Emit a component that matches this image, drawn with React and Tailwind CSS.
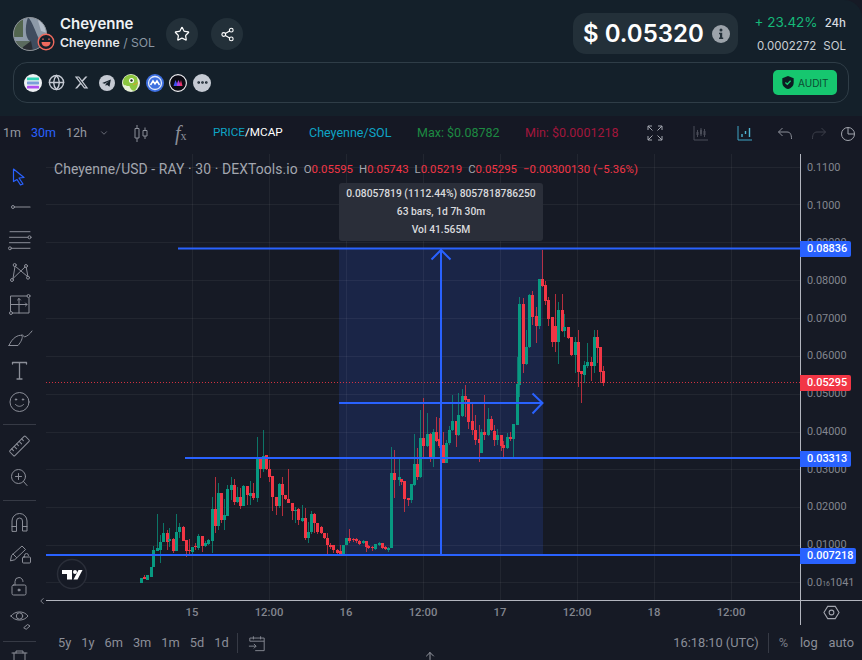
import { Star, Share2, Globe, ChevronDown, ArrowUp, ChevronLeft, MoreHorizontal } from 'lucide-react';

const G = 'g';
const R = 'r';

// x, body top, body bottom, high, low, colour (page pixels)
const CANDLES = [
  [141, 578, 583, 578, 583, G], [144, 577, 579, 575, 579, R], [147, 575, 580, 575, 580, G], [151, 567, 577, 567, 577, G],
  [153, 550, 567, 546, 567, G], [157, 548, 551, 514, 551, G], [160, 542, 550, 535, 563, G], [163, 533, 542, 523, 542, G],
  [167, 533, 542, 530, 550, R], [169, 539, 541, 528, 547, G], [173, 539, 551, 538, 553, R], [176, 532, 551, 514, 551, G],
  [179, 527, 532, 523, 538, G], [183, 527, 541, 526, 541, R], [186, 540, 551, 540, 557, R], [189, 550, 551, 539, 555, R],
  [192, 547, 552, 547, 555, G], [195, 546, 547, 543, 550, R], [198, 536, 548, 534, 550, G], [202, 536, 546, 536, 552, R],
  [205, 543, 546, 541, 547, G], [208, 540, 544, 539, 545, G], [212, 509, 541, 497, 553, G], [215, 509, 526, 477, 533, R],
  [218, 493, 526, 483, 530, G], [221, 493, 520, 493, 523, R], [224, 515, 520, 499, 530, G], [227, 489, 516, 485, 516, G],
  [231, 485, 490, 477, 500, G], [234, 485, 502, 479, 505, R], [237, 497, 502, 487, 503, G], [240, 497, 506, 488, 509, R],
  [243, 486, 506, 485, 506, G], [247, 486, 495, 486, 505, R], [250, 493, 496, 481, 505, G], [253, 493, 498, 483, 500, R],
  [257, 458, 498, 437, 502, G], [260, 458, 469, 458, 478, R], [263, 456, 469, 430, 472, G], [266, 455, 469, 455, 470, R],
  [269, 469, 477, 460, 482, R], [272, 476, 497, 476, 511, R], [276, 497, 506, 497, 515, R], [279, 484, 506, 483, 508, G],
  [282, 484, 495, 477, 516, R], [285, 495, 499, 495, 500, R], [288, 499, 503, 469, 503, R], [292, 503, 511, 503, 520, R],
  [295, 510, 511, 507, 523, G], [298, 509, 520, 508, 525, R], [302, 518, 521, 505, 522, G], [305, 518, 538, 508, 540, R],
  [308, 532, 538, 522, 543, G], [311, 514, 532, 511, 534, G], [314, 514, 523, 513, 533, R], [317, 523, 532, 523, 534, R],
  [321, 527, 533, 526, 534, R], [324, 533, 538, 533, 539, R], [327, 538, 545, 533, 555, R], [330, 545, 547, 543, 549, R],
  [333, 545, 550, 545, 553, R], [337, 550, 553, 549, 555, R], [340, 551, 554, 545, 555, R], [343, 545, 554, 545, 555, G],
  [346, 538, 545, 538, 545, G], [349, 538, 541, 529, 543, R], [353, 539, 540, 538, 542, R], [356, 539, 541, 538, 543, R],
  [359, 541, 544, 540, 545, R], [363, 541, 543, 540, 544, G], [366, 541, 547, 541, 552, R], [368, 546, 548, 545, 549, R],
  [372, 547, 548, 546, 551, R], [375, 544, 549, 544, 550, G], [379, 543, 545, 542, 546, G], [382, 543, 548, 543, 549, R],
  [385, 547, 549, 546, 550, R], [388, 548, 550, 547, 552, G], [391, 473, 548, 447, 548, G], [394, 473, 480, 450, 498, R],
  [399, 477, 480, 458, 486, G], [401, 479, 482, 479, 485, R], [404, 481, 499, 481, 512, R], [408, 498, 500, 498, 506, R],
  [411, 484, 500, 484, 503, G], [414, 464, 485, 434, 486, G], [417, 464, 477, 448, 480, R], [420, 438, 477, 410, 478, G],
  [423, 438, 446, 398, 457, R], [427, 434, 446, 413, 447, G], [430, 434, 459, 433, 462, R], [433, 432, 459, 429, 467, G],
  [436, 432, 441, 417, 442, R], [439, 439, 446, 418, 448, R], [443, 445, 463, 432, 463, R], [446, 443, 463, 440, 463, G],
  [449, 430, 443, 426, 445, G], [452, 421, 430, 395, 431, G], [456, 421, 435, 421, 447, R], [458, 415, 435, 393, 436, G],
  [462, 396, 416, 389, 417, G], [465, 396, 400, 385, 417, R], [468, 399, 422, 399, 429, R], [472, 421, 430, 404, 435, R],
  [475, 430, 440, 415, 445, R], [479, 439, 443, 425, 462, R], [481, 432, 453, 429, 453, G], [484, 432, 435, 395, 440, R],
  [488, 419, 435, 408, 436, G], [491, 419, 430, 416, 431, R], [494, 431, 440, 425, 446, R], [497, 435, 440, 429, 445, G],
  [501, 435, 446, 435, 451, R], [503, 445, 448, 441, 457, R], [507, 437, 448, 433, 449, G], [510, 437, 439, 432, 441, R],
  [513, 424, 439, 424, 457, G], [517, 384, 425, 357, 425, G], [519, 304, 385, 297, 397, G], [523, 304, 364, 298, 373, R],
  [526, 347, 364, 330, 365, G], [529, 295, 347, 294, 348, G], [532, 295, 317, 291, 325, R], [536, 316, 326, 307, 343, R],
  [539, 279, 326, 279, 329, G], [542, 279, 286, 250, 287, R], [545, 285, 301, 281, 305, R], [548, 300, 319, 297, 326, R],
  [552, 317, 342, 317, 347, R], [555, 326, 342, 294, 352, R], [558, 310, 342, 302, 364, G], [562, 310, 331, 294, 332, R],
  [564, 327, 331, 314, 337, G], [568, 327, 338, 327, 339, R], [571, 337, 355, 337, 356, R], [575, 342, 355, 337, 373, G],
  [578, 342, 372, 330, 387, R], [581, 371, 374, 371, 403, R], [584, 365, 375, 361, 383, G], [587, 362, 366, 343, 368, G],
  [591, 362, 366, 357, 381, R], [594, 337, 366, 330, 373, G], [597, 337, 348, 330, 363, R], [600, 347, 372, 347, 383, R],
  [603, 371, 383, 366, 386, R],
];

const GRID_Y = [167, 204, 242, 280, 318, 356, 394, 432, 469, 507, 545, 582];
const GRID_X = [192, 269, 346, 423, 500, 577, 654, 731];
const PRICES = ['0.1100', '0.1000', '0.09000', '0.08000', '0.07000', '0.06000', '0.05000', '0.04000', '0.03000', '0.02000', '0.01000'];
const TIMES = ['15', '12:00', '16', '12:00', '17', '12:00', '18', '12:00'];
const RANGES = ['5y', '1y', '6m', '3m', '1m', '5d', '1d'];

function Tool({ className = '', children }) {
  return (
    <svg viewBox="0 0 32 32" fill="none" stroke="#8b8e98" strokeWidth="1" strokeLinecap="round" strokeLinejoin="round" className={`w-8 h-8 shrink-0 ${className}`}>
      {children}
    </svg>
  );
}

function Sidebar() {
  return (
    <div className="w-[46px] shrink-0 h-[510px] pl-[3px] flex flex-col overflow-hidden bg-[#161a25]">
      <Tool className="mt-[10px]">
        <path d="M10.5 9 21 17.5 16 18 20 24 17.5 25 14 19.5 10.5 21.5Z" stroke="#2962ff" strokeWidth="1.2" />
      </Tool>
      <Tool className="mt-[-1px]">
        <circle cx="10" cy="16" r="1.5" />
        <path d="M11.5 16H27" strokeWidth="1.2" />
      </Tool>
      <Tool className="mt-[1px]">
        <path d="M7 7.7H27M6.5 18.7H27M8 24.3H27M6.5 13.3H25" />
        <circle cx="26.5" cy="13.3" r="1.5" />
        <circle cx="7" cy="24.3" r="1.5" />
      </Tool>
      <Tool>
        <circle cx="11.7" cy="9" r="1.5" />
        <circle cx="23" cy="10" r="1.5" />
        <circle cx="9" cy="24" r="1.5" />
        <circle cx="25" cy="21.7" r="1.5" />
        <path d="M12.3 10.3 24.4 20.4M22 11 9.8 22.7M12 10.5 10 22.5M23.3 11.5 24.8 20.2" />
      </Tool>
      <Tool>
        <path d="M7.5 23V8H24M26 10V25H9.5" />
        <circle cx="25.5" cy="8" r="1.5" />
        <circle cx="8" cy="25" r="1.5" />
        <path d="M16 25V10.5M14.5 12 16 10.5 17.5 12M7.5 16.5H24M22.5 15 24 16.5 22.5 18" />
      </Tool>
      <Tool className="mt-[3px]">
        <path d="M6 22.5H15C18 19 20 15 19 12.5 15 11.5 9 15 6 22.5Z" />
        <path d="M19 11.5 21.5 14C24.5 13 27 11 29 8" />
      </Tool>
      <Tool className="mt-[-1px]">
        <path d="M9.5 10V8.5H23.5V10M16.5 8.5V25M14 25H19" strokeWidth="1.3" />
      </Tool>
      <Tool>
        <circle cx="16.5" cy="16" r="9.5" />
        <circle cx="13" cy="13.5" r=".7" fill="#8b8e98" />
        <circle cx="20" cy="13.5" r=".7" fill="#8b8e98" />
        <path d="M12.5 18.5C14.5 21 18.5 21 20.5 18.5" />
      </Tool>
      <div className="mt-[6px] h-px w-[33px] shrink-0 bg-[#363a45]" />
      <Tool className="mt-[5px]">
        <g transform="rotate(-45 16.5 16)">
          <rect x="5.5" y="12.5" width="22" height="7" rx="1" />
          <path d="M9 12.5V15M12.5 12.5V16M16 12.5V15M19.5 12.5V16M23 12.5V15" />
        </g>
      </Tool>
      <Tool className="mt-[-1px]">
        <circle cx="15.5" cy="15.5" r="7" />
        <path d="M15.5 12.5V18.5M12.5 15.5H18.5M20.5 20.5 24 24.5" />
      </Tool>
      <div className="mt-[7px] h-px w-[33px] shrink-0 bg-[#363a45]" />
      <Tool className="mt-[5px]">
        <path d="M9 25V15A7.5 7.5 0 0 1 24 15V25H19.5V15A3 3 0 0 0 13.5 15V25Z" />
        <path d="M9 20.5H13.5M19.5 20.5H24" />
      </Tool>
      <Tool className="mt-[-1px]">
        <path d="M7.5 23.5 8.5 18.5 19 9 22.5 12.5 12 22.5ZM10 17 13.5 20.5" />
        <rect x="19.5" y="20" width="8" height="6" rx="1" />
        <path d="M21.5 20V18.5A2 2 0 0 1 25.5 18.5" />
      </Tool>
      <Tool className="mt-[3px]">
        <rect x="9" y="13" width="14" height="10" rx="1.5" />
        <path d="M12 13V9.5A4 4 0 0 1 20 9.5" />
        <circle cx="16" cy="18" r="1" fill="#8b8e98" />
      </Tool>
      <Tool>
        <path d="M8 12C12 6.5 21 6.5 25 12 21 17.5 12 17.5 8 12Z" />
        <circle cx="16.5" cy="12" r="3.2" />
        <path d="M21 23.5 24.5 20.5 27 22 23.5 25Z" />
      </Tool>
      <div className="mt-[5px] h-px w-[33px] shrink-0 bg-[#363a45]" />
      <Tool className="mt-[-1px]">
        <path d="M9 12H24M13 12V10H20V12M11 12V24H22V12" />
      </Tool>
    </div>
  );
}

function Plot() {
  return (
    <div className="relative flex-1 h-[446px] bg-[#161a25]">
      <svg viewBox="46 154 754 446" className="absolute inset-0 w-full h-full">
        <rect x="339" y="248" width="204" height="307" fill="#1a2547" />
        {GRID_Y.map((y) => <rect key={y} x="46" y={y} width="754" height="1" fill="#fff" fillOpacity=".055" />)}
        {GRID_X.map((x) => <rect key={x} x={x} y="154" width="1" height="446" fill="#fff" fillOpacity=".055" />)}
        {CANDLES.map(([x, top, bot, hi, lo, c]) => (
          <g key={x} fill={c === G ? '#089981' : '#f23645'}>
            <rect x={x} y={hi} width="1" height={lo - hi} fillOpacity=".72" />
            <rect x={x - 1} y={top} width="3" height={bot - top} />
          </g>
        ))}
        <path d="M46 382.5H800" stroke="#f23645" strokeDasharray="1 2" strokeOpacity=".85" />
        <g stroke="#2962ff" fill="none" strokeWidth="2">
          <path d="M178 248.5H800" />
          <path d="M185 458H800" />
          <path d="M46 555H800" />
          <path d="M339 403H543" />
          <path d="M441 249V555" />
          <path d="M431.5 259.5 441 250 450.5 259.5" />
          <path d="M532.5 393.5 542.5 403 532.5 413.5" />
        </g>
        <circle cx="72" cy="574" r="14.5" fill="#161a25" stroke="#2a2e39" strokeWidth="1.5" />
        <g fill="#fff">
          <path d="M62 570H72V579.5H67V574H62Z" />
          <circle cx="75" cy="572" r="2" />
          <path d="M78.5 570H82.5L77.5 579.5H73.5Z" />
        </g>
      </svg>

      <div className="absolute left-[8px] top-[6px] flex items-center whitespace-nowrap font-['Roboto',sans-serif] text-[11.4px] leading-[18px] text-[#a3a6af]">
        <span className="text-[13.9px] tracking-[0.1px]">Cheyenne/USD - RAY · 30 · DEXTools.io</span>
        <span className="ml-[6px]">O<span className="text-[#f23645]">0.05595</span></span>
        <span className="ml-[6px]">H<span className="text-[#f23645]">0.05743</span></span>
        <span className="ml-[6px]">L<span className="text-[#f23645]">0.05219</span></span>
        <span className="ml-[6px]">C<span className="text-[#f23645]">0.05295</span></span>
        <span className="ml-[6px] text-[#f23645]">−0.00300130 (−5.36%)</span>
      </div>

      <div className="absolute left-[293px] top-[29px] w-[204px] h-[58px] rounded-[3px] bg-[#2a2e39] flex flex-col items-center justify-center font-['Roboto',sans-serif] text-[10.3px] leading-[18px] font-medium text-[#d9dadd] whitespace-nowrap">
        <span>0.08057819 (1112.44%) 8057818786250</span>
        <span>63 bars, 1d 7h 30m</span>
        <span>Vol 41.565M</span>
      </div>
    </div>
  );
}

function PriceAxis() {
  return (
    <div className="relative w-[62px] h-[446px] shrink-0 border-l border-[#b2b5be] bg-[#161a25] font-['Roboto',sans-serif] text-[10.9px] text-[#83868f]">
      <div className="flex flex-col pl-[6px] mt-[-5px]">
        {PRICES.map((p) => <div key={p} className="h-[37.7px] leading-[37.7px]">{p}</div>)}
        <div className="h-[37.7px] leading-[37.7px]">0.0<span className="text-[7px]">16</span>1041</div>
      </div>
      <div className="absolute left-[-1px] top-[87px] w-[51px] h-[16px] pl-[7px] rounded-r-[2px] bg-[#2962ff] text-white font-medium leading-[16px]">0.08836</div>
      <div className="absolute left-[-1px] top-[221px] w-[51px] h-[16px] pl-[7px] rounded-r-[2px] bg-[#f23645] text-white font-medium leading-[16px]">0.05295</div>
      <div className="absolute left-[-1px] top-[297px] w-[51px] h-[16px] pl-[7px] rounded-r-[2px] bg-[#2962ff] text-white font-medium leading-[16px]">0.03313</div>
      <div className="absolute left-[-1px] top-[394px] w-[56px] h-[16px] pl-[7px] rounded-r-[2px] bg-[#2962ff] text-white font-medium leading-[16px]">0.007218</div>
    </div>
  );
}

function TimeAxis() {
  return (
    <div className="flex h-[25px] border-t border-[#b2b5be] bg-[#161a25] font-['Roboto',sans-serif] text-[11.3px] font-medium text-[#83868f]">
      <div className="relative flex-1 flex pl-[107.5px]">
        <ChevronLeft className="absolute left-[-9px] top-[-6px] w-[10px] h-[12px] text-[#9598a1]" />
        {TIMES.map((t, i) => <div key={i} className="w-[77px] text-center leading-[23px]">{t}</div>)}
      </div>
      <div className="w-[62px] shrink-0 border-l border-[#b2b5be] flex justify-center pt-[3px]">
        <svg viewBox="0 0 18 18" className="w-[17px] h-[17px]" fill="none" stroke="#a3a6af" strokeWidth="1.1">
          <path d="M5 2.5H13L17 9 13 15.5H5L1 9Z" />
          <circle cx="9" cy="9" r="2.5" />
        </svg>
      </div>
    </div>
  );
}

function BottomBar() {
  return (
    <div className="relative flex items-center h-[35px] bg-[#161a25] font-['Roboto',sans-serif] text-[12.8px] text-[#8b8e98]">
      <div className="flex gap-[10px] pl-[12px] w-[190px]">
        {RANGES.map((r) => <span key={r}>{r}</span>)}
      </div>
      <div className="w-px h-[20px] bg-[#363a45] ml-[1px]" />
      <svg viewBox="0 0 20 20" className="ml-[10px] w-[18px] h-[18px]" fill="none" stroke="#8b8e98" strokeWidth="1">
        <path d="M2 8V4.5H18V18.5H8M2 8H18M6 2.5V6M14 2.5V6M1 13.5H9M6.5 11 9 13.5 6.5 16" />
      </svg>
      <ArrowUp className="absolute left-[378px] top-[25px] w-[12px] h-[12px] text-[#9598a1]" />
      <span className="ml-auto">16:18:10 (UTC)</span>
      <div className="w-px h-[20px] bg-[#363a45] ml-[9px]" />
      <span className="ml-[10px] text-[#787b86]">%</span>
      <span className="ml-[12px]">log</span>
      <span className="ml-[11px] mr-[8px]">auto</span>
    </div>
  );
}

function Avatar() {
  return (
    <div className="relative w-[34px] h-[34px] shrink-0">
      <svg viewBox="0 0 34 34" className="w-[34px] h-[34px]">
        <defs>
          <clipPath id="av"><circle cx="17" cy="17" r="16.5" /></clipPath>
        </defs>
        <g clipPath="url(#av)">
          <rect width="34" height="34" fill="#8d9aa8" />
          <rect y="0" width="10" height="20" fill="#53664f" />
          <rect y="24" width="34" height="10" fill="#5b6a5e" />
          <path d="M15 0C20 6 22 14 26 22L28 34H18L17 24C13 22 11 12 15 0Z" fill="#3f4c5e" />
          <path d="M10 30 18 24 20 34H9Z" fill="#2a2d33" />
          <path d="M24 0H34V16L28 14Z" fill="#b3bdc9" />
        </g>
        <circle cx="17" cy="17" r="16.5" fill="none" stroke="#8c9197" />
      </svg>
      <svg viewBox="0 0 18 18" className="absolute left-[24px] top-[16px] w-[18px] h-[18px]" fill="none">
        <circle cx="9" cy="9" r="7.8" fill="#14202a" stroke="#ef6a5e" strokeWidth="1.4" />
        <path d="M5 6.5Q6 5 7 6.5M11 6.5Q12 5 13 6.5" stroke="#ef6a5e" />
        <path d="M4.5 9H13.5C13.5 15 4.5 15 4.5 9Z" fill="#ef6a5e" />
      </svg>
    </div>
  );
}

function LinkIcons() {
  return (
    <div className="flex items-center">
      <svg viewBox="0 0 18 18" className="w-[18px] h-[18px]">
        <circle cx="9" cy="9" r="9" fill="#eef0f3" />
        <rect x="3" y="3.5" width="12" height="2.8" rx=".6" fill="#2fd3b5" />
        <rect x="3" y="7.6" width="12" height="2.8" rx=".6" fill="#7a9fd8" />
        <rect x="3" y="11.7" width="12" height="2.8" rx=".6" fill="#b04ff0" />
      </svg>
      <Globe className="ml-[6px] w-[17px] h-[17px] text-[#c5cad3]" strokeWidth={2} />
      <svg viewBox="0 0 24 24" className="ml-[9px] w-[15px] h-[15px]" fill="#c5cad3">
        <path d="M18.244 2.25h3.308l-7.227 8.26 8.502 11.24H16.17l-5.214-6.817L4.99 21.75H1.68l7.73-8.835L1.254 2.25H8.08l4.713 6.231zm-1.161 17.52h1.833L7.084 4.126H5.117z" />
      </svg>
      <svg viewBox="0 0 16 16" className="ml-[10px] w-[16px] h-[16px]">
        <circle cx="8" cy="8" r="8" fill="#c5cad3" />
        <path d="M3.2 7.9 11.8 4.5 10.5 11.7 7.9 9.8 6.7 11 6.6 9.1 10.2 6 5.6 8.7Z" fill="#14202a" />
      </svg>
      <svg viewBox="0 0 18 18" className="ml-[7px] w-[18px] h-[18px]">
        <circle cx="9" cy="9" r="9" fill="#e8f0d8" />
        <path d="M1 9A8 8 0 0 1 15 3.5C16 8 17 12 13 16.5 10 17.5 8 14 7.5 12 5 12 1.5 12 1 9Z" fill="#8cc63f" />
        <circle cx="9.5" cy="6.5" r="2.5" fill="#fff" />
        <circle cx="9.5" cy="6.5" r="1.2" fill="#1f2a14" />
        <path d="M11 10.5Q14 10.5 16 8.5" stroke="#d8a32a" fill="none" />
      </svg>
      <svg viewBox="0 0 18 18" className="ml-[6px] w-[18px] h-[18px]">
        <circle cx="9" cy="9" r="9" fill="#3d6fe0" />
        <circle cx="9" cy="9" r="6.5" fill="none" stroke="#dfe8fb" strokeWidth="1.3" />
        <path d="M4.5 11 7 7 9 10 11 7 13.5 11" fill="none" stroke="#fff" strokeWidth="1.5" />
      </svg>
      <svg viewBox="0 0 18 18" className="ml-[5px] w-[18px] h-[18px]">
        <circle cx="9" cy="9" r="8.4" fill="#0b0b14" stroke="#f1f1f4" strokeWidth="1.1" />
        <path d="M4.5 12 6.5 6 8 9.5V12Z" fill="#3f51f0" />
        <path d="M8 9.5 9.5 6 11 9.5V12H8Z" fill="#b23fd8" />
        <path d="M11 9.5 12 6 13.5 12H11Z" fill="#e8356a" />
      </svg>
      <div className="ml-[6px] w-[18px] h-[18px] rounded-full bg-[#c5cad3] flex items-center justify-center">
        <MoreHorizontal className="w-[13px] h-[13px] text-[#14202a]" strokeWidth={3} />
      </div>
    </div>
  );
}

function Header() {
  return (
    <div className="h-[116px] px-[13px] bg-[#14202a] rounded-tr-[18px] font-['Inter',sans-serif]">
      <div className="flex h-[62px]">
        <div className="flex items-start pt-[17px] w-[47px]"><Avatar /></div>
        <div className="pt-[13px] w-[106px]">
          <div className="text-[15px] leading-[22px] font-semibold text-[#eef1f4]">Cheyenne</div>
          <div className="text-[12.2px] leading-[18px] mt-[-1px] whitespace-nowrap">
            <span className="font-semibold text-[#e6e9ed]">Cheyenne</span>
            <span className="text-[#8a96a3]"> / SOL</span>
          </div>
        </div>
        <div className="flex gap-[13px] pt-[18px]">
          <div className="w-8 h-8 rounded-full bg-[#233039] flex items-center justify-center">
            <Star className="w-[16px] h-[16px] text-white" strokeWidth={1.8} />
          </div>
          <div className="w-8 h-8 rounded-full bg-[#233039] flex items-center justify-center">
            <Share2 className="w-[15px] h-[15px] text-white" strokeWidth={1.8} />
          </div>
        </div>
        <div className="ml-auto mt-[13px] h-[41px] w-[165px] pl-[10px] rounded-[13px] bg-[#233039] flex items-center">
          <span className="text-[24px] font-semibold text-white whitespace-nowrap">$ 0.05320</span>
          <svg viewBox="0 0 18 18" className="ml-[8px] w-[18px] h-[18px]">
            <circle cx="9" cy="9" r="9" fill="#9ca3aa" />
            <circle cx="9" cy="5" r="1.5" fill="#233039" />
            <path d="M7 7.8H10.2V12.6H11.2V14H7V12.6H8V9.2H7Z" fill="#233039" />
          </svg>
        </div>
        <div className="w-[88px] ml-[20px] mr-[3px] pt-[13px] flex flex-col items-end whitespace-nowrap">
          <div className="flex items-baseline leading-[18px]">
            <span className="text-[13.5px] text-[#16b979]">+ 23.42%</span>
            <span className="ml-[7px] text-[11.5px] font-medium text-[#d9dde1]">24h</span>
          </div>
          <div className="mt-[5px] text-[11.5px] leading-[18px] text-[#c9ced3]">0.0002272<span className="ml-[7px]">SOL</span></div>
        </div>
      </div>
      <div className="h-[41px] rounded-[14px] border border-[#2f3d47] pl-[10px] pr-[9px] flex items-center justify-between">
        <LinkIcons />
        <div className="w-[64px] h-[25px] mr-[2px] rounded-[5px] bg-[#16c76f] flex items-center pl-[8px]">
          <svg viewBox="0 0 16 16" className="w-[14px] h-[15px]">
            <path d="M8 .5 14.5 3V8C14.5 12 11.5 14.5 8 15.5 4.5 14.5 1.5 12 1.5 8V3Z" fill="#0d1b22" />
            <path d="M5 8 7.2 10 11 6" fill="none" stroke="#16c76f" strokeWidth="1.5" />
          </svg>
          <span className="ml-[3px] text-[10px] text-[#0d4a32] leading-none">AUDIT</span>
        </div>
      </div>
    </div>
  );
}

function TopBar() {
  return (
    <div className="h-[34px] flex items-center bg-[#151824] font-['Roboto',sans-serif] text-[12.5px] text-[#9598a1] whitespace-nowrap">
      <span className="ml-[3px] w-[28px]">1m</span>
      <span className="w-[35px] text-[#2962ff]">30m</span>
      <span className="w-[33px]">12h</span>
      <ChevronDown className="w-[10px] h-[10px] text-[#787b86]" />
      <svg viewBox="0 0 16 20" className="ml-[24px] w-[16px] h-[20px]" fill="none" stroke="#8b8e98">
        <path d="M2 5.5H6V15H2ZM4 2V5.5M4 15V19M10 7.5H14V13H10ZM12 4.5V7.5M12 13V16" />
      </svg>
      <span className="ml-[26px] w-[20px] font-['Liberation_Serif',serif] italic text-[20px] leading-none text-[#8b8e98]">f<span className="text-[12px] not-italic">x</span></span>
      <span className="ml-[18px] w-[96px] text-[11.7px] text-[#0ea5c6]">PRICE<span className="text-white">/MCAP</span></span>
      <span className="w-[108px] text-[#0ea5c6]">Cheyenne/SOL</span>
      <span className="w-[108px] text-[#1d8a42]">Max: $0.08782</span>
      <span className="w-[122px] text-[#a3163c]">Min: $0.0001218</span>
      <svg viewBox="0 0 16 16" className="w-[16px] h-[16px]" fill="none" stroke="#a3a6af">
        <path d="M1 5V1H5M1 1 5.5 5.5M11 1H15V5M15 1 10.5 5.5M1 11V15H5M1 15 5.5 10.5M11 15H15V11M15 15 10.5 10.5" />
      </svg>
      <svg viewBox="0 0 16 16" className="ml-[30px] w-[16px] h-[16px]" fill="none" stroke="#4a4d58">
        <path d="M1 1V15H15M4.5 5V12M4 7H5V10H4ZM8 3V11M7.5 5H8.5V9H7.5ZM11.5 4V12M11 6H12V10H11Z" />
      </svg>
      <svg viewBox="0 0 16 16" className="ml-[28px] w-[16px] h-[16px]" fill="none" stroke="#3fa3c4">
        <path d="M1 1V15H15" />
        <path d="M5 9V12M8.5 6V9M12.5 3V12" stroke="#4fb4d2" strokeWidth="1.4" />
      </svg>
      <svg viewBox="0 0 16 16" className="ml-[24px] w-[16px] h-[16px]" fill="none" stroke="#8b8e98">
        <path d="M5.5 3 1.5 7 5.5 11M1.5 7H10C13 7 14.5 9 14.5 14" />
      </svg>
      <svg viewBox="0 0 16 16" className="ml-[18px] w-[16px] h-[16px]" fill="none" stroke="#3c3f4a">
        <path d="M10.5 3 14.5 7 10.5 11M14.5 7H6C3 7 1.5 9 1.5 14" />
      </svg>
      <svg viewBox="0 0 16 16" className="ml-[13px] w-[16px] h-[16px] shrink-0" fill="none" stroke="#a3a6af">
        <circle cx="8" cy="9" r="6.5" />
        <path d="M8 2.5V9H14" />
      </svg>
    </div>
  );
}

export default function App() {
  return (
    <div className="w-[862px] h-[660px] overflow-hidden bg-[#161a25]">
      <Header />
      <TopBar />
      <div className="flex">
        <Sidebar />
        <div className="flex-1 min-w-0 pt-[4px]">
          <div className="flex">
            <Plot />
            <PriceAxis />
          </div>
          <TimeAxis />
          <BottomBar />
        </div>
      </div>
    </div>
  );
}
